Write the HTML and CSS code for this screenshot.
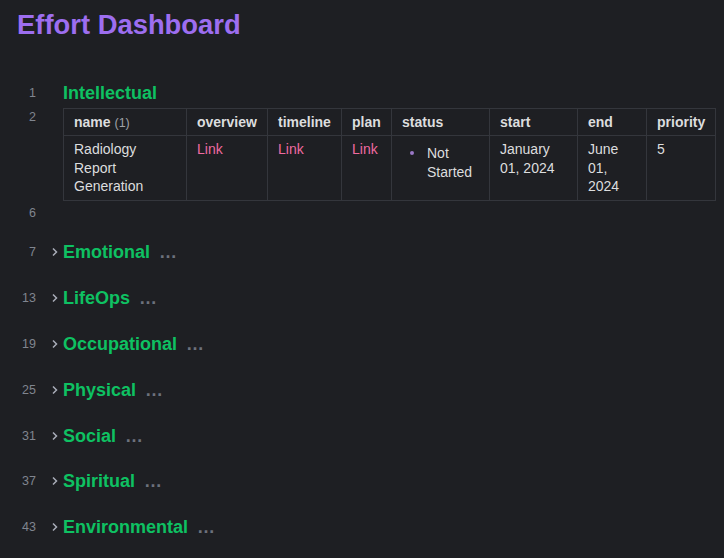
FILE: index.html
```html
<!DOCTYPE html>
<html>
<head>
<meta charset="utf-8">
<link rel="stylesheet" href="styles.css">
</head>
<body>
<h1 class="title">Effort Dashboard</h1>
<div class="doc">
  <div class="line heading-line first">
    <span class="num">1</span><span class="fold"></span>
    <h2 class="heading">Intellectual</h2>
  </div>
  <div class="line table-line">
    <span class="num">2</span><span class="fold"></span>
    <table class="grid">
      <thead>
        <tr>
          <th class="c-name">name <span class="count">(1)</span></th>
          <th class="c-overview">overview</th>
          <th class="c-timeline">timeline</th>
          <th class="c-plan">plan</th>
          <th class="c-status">status</th>
          <th class="c-start">start</th>
          <th class="c-end">end</th>
          <th class="c-priority">priority</th>
        </tr>
      </thead>
      <tbody>
        <tr>
          <td>Radiology Report Generation</td>
          <td><a class="link">Link</a></td>
          <td><a class="link">Link</a></td>
          <td><a class="link">Link</a></td>
          <td><ul class="status"><li><span>Not Started</span></li></ul></td>
          <td>January 01, 2024</td>
          <td>June 01, 2024</td>
          <td>5</td>
        </tr>
      </tbody>
    </table>
  </div>
  <div class="line empty-line">
    <span class="num">6</span><span class="fold"></span><span></span>
  </div>
  <div class="line heading-line collapsed">
    <span class="num">7</span><span class="fold"><svg viewBox="0 0 8 10" width="8" height="10"><path d="M2 1.5 L5.5 5 L2 8.5" fill="none" stroke="currentColor" stroke-width="1.5"/></svg></span>
    <h2 class="heading">Emotional <span class="ellipsis">…</span></h2>
  </div>
  <div class="line heading-line collapsed">
    <span class="num">13</span><span class="fold"><svg viewBox="0 0 8 10" width="8" height="10"><path d="M2 1.5 L5.5 5 L2 8.5" fill="none" stroke="currentColor" stroke-width="1.5"/></svg></span>
    <h2 class="heading">LifeOps <span class="ellipsis">…</span></h2>
  </div>
  <div class="line heading-line collapsed">
    <span class="num">19</span><span class="fold"><svg viewBox="0 0 8 10" width="8" height="10"><path d="M2 1.5 L5.5 5 L2 8.5" fill="none" stroke="currentColor" stroke-width="1.5"/></svg></span>
    <h2 class="heading">Occupational <span class="ellipsis">…</span></h2>
  </div>
  <div class="line heading-line collapsed">
    <span class="num">25</span><span class="fold"><svg viewBox="0 0 8 10" width="8" height="10"><path d="M2 1.5 L5.5 5 L2 8.5" fill="none" stroke="currentColor" stroke-width="1.5"/></svg></span>
    <h2 class="heading">Physical <span class="ellipsis">…</span></h2>
  </div>
  <div class="line heading-line collapsed">
    <span class="num">31</span><span class="fold"><svg viewBox="0 0 8 10" width="8" height="10"><path d="M2 1.5 L5.5 5 L2 8.5" fill="none" stroke="currentColor" stroke-width="1.5"/></svg></span>
    <h2 class="heading">Social <span class="ellipsis">…</span></h2>
  </div>
  <div class="line heading-line collapsed">
    <span class="num">37</span><span class="fold"><svg viewBox="0 0 8 10" width="8" height="10"><path d="M2 1.5 L5.5 5 L2 8.5" fill="none" stroke="currentColor" stroke-width="1.5"/></svg></span>
    <h2 class="heading">Spiritual <span class="ellipsis">…</span></h2>
  </div>
  <div class="line heading-line collapsed">
    <span class="num">43</span><span class="fold"><svg viewBox="0 0 8 10" width="8" height="10"><path d="M2 1.5 L5.5 5 L2 8.5" fill="none" stroke="currentColor" stroke-width="1.5"/></svg></span>
    <h2 class="heading">Environmental <span class="ellipsis">…</span></h2>
  </div>
</div>
</body>
</html>
```
FILE: styles.css
```css
html, body {
  margin: 0;
  padding: 0;
  background: #1e1f23;
  font-family: "Liberation Sans", Arial, sans-serif;
  color: #dcddde;
  overflow: hidden;
}

.title {
  margin: 8px 0 0 17px;
  font-size: 27.4px;
  line-height: 34px;
  font-weight: 700;
  color: #9d6ef0;
}

.doc {
  padding-top: 39px;
}

.line {
  display: grid;
  grid-template-columns: 37px 26px 1fr;
  align-items: center;
}

.num {
  text-align: right;
  font-size: 12.5px;
  color: #80858f;
  line-height: 14px;
  padding-right: 1px;
}

.fold {
  display: flex;
  justify-content: flex-start;
  padding-left: 14px;
  color: #a9adb8;
}
.fold svg { display: block; }

.heading {
  margin: 0;
  font-size: 18px;
  line-height: 24px;
  font-weight: 700;
  color: #0ec162;
}

.ellipsis {
  color: #6c717c;
  margin-left: 4px;
  letter-spacing: 1.5px;
}

.heading-line.first {
  height: 24px;
}

.table-line {
  align-items: start;
  margin-top: 3px;
}
.table-line .num {
  padding-top: 2px;
}

.grid {
  border-collapse: collapse;
  font-size: 14px;
  width: 653px;
  table-layout: fixed;
}

.grid th, .grid td {
  box-sizing: border-box;
  border: 1px solid #34363c;
  text-align: left;
  vertical-align: top;
  padding: 4px 10px 4px 10px;
  line-height: 18.5px;
}

.grid th {
  font-weight: 700;
  color: #dcddde;
  line-height: 18px;
  padding: 4px 10px 3px 10px;
}

.count {
  font-weight: 400;
  color: #a0a2a8;
  font-size: 12.5px;
}

.c-name { width: 123px; }
.c-overview { width: 81px; }
.c-timeline { width: 74px; }
.c-plan { width: 50px; }
.c-status { width: 98px; }
.c-start { width: 88px; }
.c-end { width: 69px; }
.c-priority { width: 69px; }

.link {
  color: #ee6aa0;
  text-decoration: none;
}

.status {
  margin: 4px 0 0 0;
  padding-left: 8px;
  list-style: none;
}
.status li {
  display: flex;
  align-items: flex-start;
}
.status li::before {
  content: "";
  flex: none;
  width: 4px;
  height: 4px;
  border-radius: 50%;
  background: #9a78c6;
  margin: 7px 13px 0 0;
}

.empty-line {
  height: 22px;
  margin-top: 1px;
}

.collapsed {
  margin-top: 18px;
  height: 27.8px;
}
.empty-line + .collapsed {
  margin-top: 15px;
}
```
